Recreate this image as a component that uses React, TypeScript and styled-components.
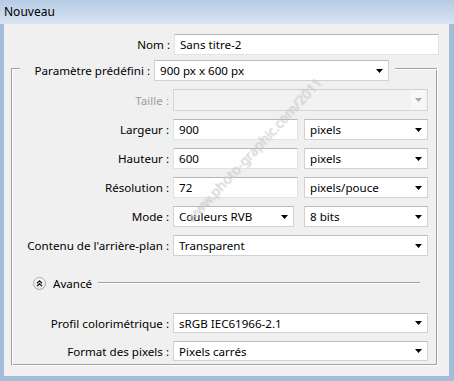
import React from 'react';
import styled, { createGlobalStyle } from 'styled-components';

const Global = createGlobalStyle`
  html, body { margin: 0; padding: 0; }
  body {
    width: 454px; height: 381px; overflow: hidden;
    font-family: "Segoe UI", "Noto Sans", "Liberation Sans", sans-serif;
    font-size: 11.6px; color: #000;
  }
`;

const Window = styled.div`
  position: relative;
  width: 454px; height: 381px;
  display: flex; flex-direction: column;
  background: #a3bcd9;
  overflow: hidden;
`;

const TitleBar = styled.div`
  height: 24px; flex: none;
  display: flex; align-items: center;
  padding: 0 0 1px 4px; box-sizing: border-box;
  background: linear-gradient(#b5cbe4, #d8e4f2);
  font-size: 12px;
`;

const Frame = styled.div`
  flex: 1;
  display: flex;
  padding: 0 5px 5px 4px;
`;

const Body = styled.div`
  flex: 1;
  background: #f0f0f0;
  padding-top: 10px;
  display: flex; flex-direction: column;
`;

const Row = styled.div<{ $label: number; $field: number }>`
  display: grid;
  grid-template-columns: ${p => p.$label}px ${p => p.$field}px;
  column-gap: 4px;
  align-items: center;
`;

const Label = styled.div<{ $disabled?: boolean }>`
  text-align: right;
  white-space: nowrap;
  color: ${p => (p.$disabled ? '#9d9d9d' : '#000')};
`;

const TextBox = styled.div<{ $w?: number; $h?: number }>`
  box-sizing: border-box;
  width: ${p => (p.$w ? `${p.$w}px` : '100%')};
  height: ${p => p.$h ?? 21}px;
  background: #fff;
  border: 1px solid #dfe3e8;
  border-top-color: #b4b7bd;
  padding: 0 5px;
  display: flex; align-items: center;
  white-space: nowrap;
`;

const Combo = styled.div<{ $w?: number; $h?: number; $disabled?: boolean }>`
  box-sizing: border-box;
  width: ${p => (p.$w ? `${p.$w}px` : '100%')};
  height: ${p => p.$h ?? 21}px;
  background: ${p => (p.$disabled ? '#f2f2f2' : '#fff')};
  border: 1px solid ${p => (p.$disabled ? '#d6d6d6' : '#d2d2d2')};
  border-top-color: ${p => (p.$disabled ? '#cfcfcf' : '#bcbcbc')};
  padding: 0 6px 0 5px;
  display: flex; align-items: center; justify-content: space-between;
  white-space: nowrap;
`;

const ArrowCell = styled.span<{ $disabled?: boolean }>`
  display: flex; align-items: center; justify-content: center;
  width: 14px; height: 100%;
  margin-right: -4px;
  background: ${p => (p.$disabled ? '#f7f7f7' : 'transparent')};
`;

const Arrow = ({ disabled }: { disabled?: boolean }) => (
  <ArrowCell $disabled={disabled}>
    <svg width="7" height="4" viewBox="0 0 7 4">
      <path d="M0 0H7L3.5 4Z" fill={disabled ? '#a8a8a8' : '#000'} />
    </svg>
  </ArrowCell>
);

const Select = ({ value, w, h, disabled }: { value?: string; w?: number; h?: number; disabled?: boolean }) => (
  <Combo $w={w} $h={h} $disabled={disabled}>
    <span>{value}</span>
    <Arrow disabled={disabled} />
  </Combo>
);

const Group = styled.div`
  margin: 13px 0 0 7px;
  width: 427px;
  box-sizing: border-box;
  display: flex; flex-direction: column;
  border-left: 1px solid #a0a0a0;
  border-right: 1px solid #fff;
  border-bottom: 1px solid #fff;
  box-shadow: inset 1px 0 0 #fff, inset -1px 0 0 #a0a0a0, inset 0 -1px 0 #a0a0a0;
  padding-bottom: 4px;
`;

const Header = styled.div`
  display: flex;
  align-items: flex-start;
  margin-top: -8px;
  height: 21px;
`;

const Etch = styled.div<{ $w?: number; $mr?: number; $mt?: number }>`
  height: 0;
  margin-top: ${p => p.$mt ?? 8}px;
  border-top: 1px solid #a0a0a0;
  border-bottom: 1px solid #fff;
  ${p => (p.$w ? `width: ${p.$w}px; flex: none;` : 'flex: 1;')}
  margin-right: ${p => p.$mr ?? 0}px;
`;

const Legend = styled.div`
  display: grid;
  grid-template-columns: 130px 235px;
  column-gap: 4px;
  align-items: center;
  padding: 0 6px 0 0;
`;

const Fields = styled.div<{ $mt: number }>`
  display: grid;
  row-gap: 8px;
  margin-top: ${p => p.$mt}px;
`;

const Pair = styled.div`
  display: flex;
  justify-content: space-between;
`;

const Advanced = styled.div`
  display: flex;
  align-items: center;
  height: 18px;
  margin: 18px 0 0 21px;
`;

const AdvText = styled.span`
  margin: 0 6px 0 7px;
`;

const AdvIcon = () => (
  <svg width="13" height="13" viewBox="0 0 13 13">
    <defs>
      <linearGradient id="g" x1="0" y1="0" x2="0" y2="1">
        <stop offset="0" stopColor="#ffffff" />
        <stop offset="1" stopColor="#e4e4e4" />
      </linearGradient>
    </defs>
    <circle cx="6.5" cy="6.5" r="6" fill="url(#g)" stroke="#a9a9a9" />
    <path d="M4 6.3L6.5 3.9L9 6.3M4 9.1L6.5 6.7L9 9.1" fill="none" stroke="#1a1a1a" strokeWidth="1.3" />
  </svg>
);

const Watermark = styled.div`
  position: absolute;
  left: 254px; top: 150px;
  width: 0; height: 0;
  pointer-events: none;
  span {
    position: absolute;
    white-space: nowrap;
    transform: translate(-50%, -50%) rotate(-47deg);
    font-size: 13.5px;
    color: rgba(255, 255, 255, 0.6);
    text-shadow: 0 0 1px rgba(0, 0, 0, 0.35);
  }
`;

export default function App() {
  return (
    <>
      <Global />
      <Window>
        <TitleBar>Nouveau</TitleBar>
        <Frame>
          <Body>
            <Row $label={166} $field={265}>
              <Label>Nom :</Label>
              <TextBox>Sans titre-2</TextBox>
            </Row>
            <Group>
              <Header>
                <Etch $w={8} />
                <Legend>
                  <Label>Paramètre prédéfini :</Label>
                  <Select value="900 px x 600 px" />
                </Legend>
                <Etch />
              </Header>
              <Fields $mt={8}>
                <Row $label={157} $field={255}>
                  <Label $disabled>Taille :</Label>
                  <Select h={22} disabled />
                </Row>
                <Row $label={157} $field={255}>
                  <Label>Largeur :</Label>
                  <Pair>
                    <TextBox $w={125}>900</TextBox>
                    <Select w={124} value="pixels" />
                  </Pair>
                </Row>
                <Row $label={157} $field={255}>
                  <Label>Hauteur :</Label>
                  <Pair>
                    <TextBox $w={125}>600</TextBox>
                    <Select w={124} value="pixels" />
                  </Pair>
                </Row>
                <Row $label={157} $field={255}>
                  <Label>Résolution :</Label>
                  <Pair>
                    <TextBox $w={125}>72</TextBox>
                    <Select w={124} value="pixels/pouce" />
                  </Pair>
                </Row>
                <Row $label={157} $field={255}>
                  <Label>Mode :</Label>
                  <Pair>
                    <Select w={121} value="Couleurs RVB" />
                    <Select w={124} value="8 bits" />
                  </Pair>
                </Row>
                <Row $label={157} $field={255}>
                  <Label>Contenu de l'arrière-plan :</Label>
                  <Select value="Transparent" />
                </Row>
              </Fields>
              <Advanced>
                <AdvIcon />
                <AdvText>Avancé</AdvText>
                <Etch $mr={17} $mt={0} />
              </Advanced>
              <Fields $mt={21}>
                <Row $label={157} $field={255}>
                  <Label>Profil colorimétrique :</Label>
                  <Select h={20} value="sRGB IEC61966-2.1" />
                </Row>
                <Row $label={157} $field={255}>
                  <Label>Format des pixels :</Label>
                  <Select h={20} value="Pixels carrés" />
                </Row>
              </Fields>
            </Group>
          </Body>
        </Frame>
        <Watermark>
          <span>www.photo-graphic.com/2011</span>
        </Watermark>
      </Window>
    </>
  );
}
